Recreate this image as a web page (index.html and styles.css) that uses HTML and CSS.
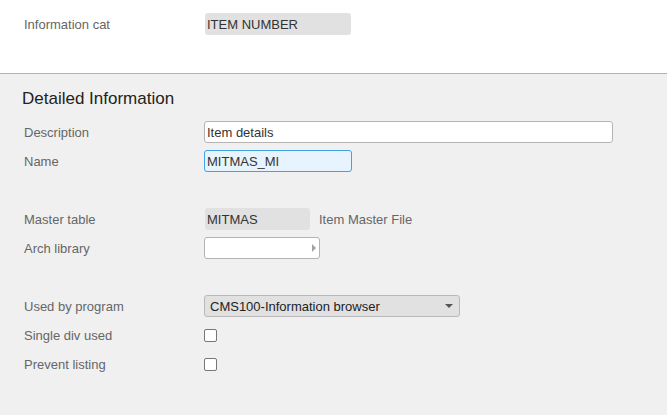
FILE: index.html
```html
<!DOCTYPE html>
<html>
<head>
<meta charset="utf-8">
<link rel="stylesheet" href="styles.css">
</head>
<body>
<div class="page">
  <div class="top">
    <div class="row">
      <div class="label">Information cat</div>
      <div class="ro ro-cat">ITEM NUMBER</div>
    </div>
  </div>
  <div class="detail">
    <h2 class="heading">Detailed Information</h2>
    <div class="form">
      <div class="row">
        <div class="label">Description</div>
        <div class="input input-desc">Item details</div>
      </div>
      <div class="row">
        <div class="label">Name</div>
        <div class="input input-name focus">MITMAS_MI</div>
      </div>
      <div class="row spacer"></div>
      <div class="row">
        <div class="label">Master table</div>
        <div class="ro ro-master">MITMAS</div>
        <div class="note">Item Master File</div>
      </div>
      <div class="row">
        <div class="label">Arch library</div>
        <div class="input input-arch"><span class="tri-right"></span></div>
      </div>
      <div class="row spacer"></div>
      <div class="row">
        <div class="label">Used by program</div>
        <div class="select">CMS100-Information browser<span class="tri-down"></span></div>
      </div>
      <div class="row">
        <div class="label">Single div used</div>
        <div class="check"></div>
      </div>
      <div class="row">
        <div class="label">Prevent listing</div>
        <div class="check"></div>
      </div>
    </div>
  </div>
</div>
</body>
</html>
```

FILE: styles.css
```css
* { box-sizing: border-box; }
html, body { margin: 0; padding: 0; }
body {
  font-family: "Liberation Sans", Arial, sans-serif;
  font-size: 13px;
  color: #333;
  background: #f0f0f0;
  width: 667px;
  height: 415px;
  overflow: hidden;
}
.page { display: flex; flex-direction: column; height: 415px; }
.top {
  background: #fff;
  height: 74px;
  padding: 13px 0 0 24px;
  border-bottom: 1px solid #b3b3b3;
}
.detail {
  flex: 1;
  background: #f0f0f0;
  padding: 15px 0 0 22px;
}
.heading {
  margin: 0;
  font-size: 17px;
  font-weight: normal;
  line-height: 20px;
  color: #222;
}
.form {
  margin-top: 12px;
  padding-left: 2px;
  display: flex;
  flex-direction: column;
  gap: 7px;
}
.row {
  display: flex;
  align-items: center;
  height: 22px;
}
.label {
  width: 180px;
  flex: none;
  color: #666;
  line-height: 22px;
  padding-top: 1px;
}
.top .label { width: 181px; }
.ro {
  height: 22px;
  line-height: 22px;
  padding-top: 1px;
  background: #e1e1e1;
  border-radius: 3px;
  padding-left: 2px;
  color: #333;
}
.ro-cat { width: 146px; }
.ro-master { width: 105px; margin-left: 1px; }
.note { margin-left: 9px; color: #666; padding-top: 1px; }
.input {
  position: relative;
  height: 22px;
  line-height: 20px;
  padding-top: 1px;
  border: 1px solid #b4b4b4;
  border-radius: 3px;
  background: #fff;
  padding-left: 2px;
}
.input-desc { width: 409px; }
.input-name { width: 148px; }
.focus { border-color: #3fa3e6; background: #e8f4fd; }
.input-arch { width: 116px; }
.tri-right {
  position: absolute;
  right: 3px;
  top: 6px;
  width: 0; height: 0;
  border-top: 4px solid transparent;
  border-bottom: 4px solid transparent;
  border-left: 4px solid #a3a3a3;
}
.select {
  position: relative;
  width: 256px;
  height: 22px;
  line-height: 20px;
  padding-top: 1px;
  border: 1px solid #b8b8b8;
  border-radius: 3px;
  background: #e1e1e1;
  padding-left: 5px;
  color: #222;
}
.tri-down {
  position: absolute;
  right: 6px;
  top: 8px;
  width: 0; height: 0;
  border-left: 4px solid transparent;
  border-right: 4px solid transparent;
  border-top: 4px solid #555;
}
.check {
  width: 13px;
  height: 13px;
  border: 1px solid #767676;
  border-radius: 2px;
  background: #fff;
}
```
